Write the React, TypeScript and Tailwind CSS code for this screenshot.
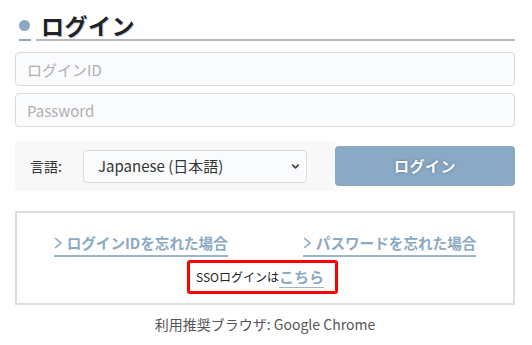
import { ChevronDown } from "lucide-react";

const links = [
  { id: 1, label: "ログインIDを忘れた場合" },
  { id: 2, label: "パスワードを忘れた場合" },
];

const App = () => {
  return (
    <div className="w-[532px] min-h-[345px] bg-white pl-[15px] pr-[17px] pt-[11px] font-['Noto_Sans_CJK_JP','Noto_Sans',sans-serif] text-[#222]">
      {/* title */}
      <div className="flex items-end">
        <div className="ml-[4px] w-[12px] border-b-2 border-[#8aa9c4] h-[30px] flex items-center">
          <span className="block w-[11px] h-[11px] rounded-full bg-[#8aa9c4]" />
        </div>
        <div className="ml-[5px] flex-1 border-b-2 border-[#b8b8b8] pl-[5px]">
          <h1 className="text-[23px] leading-[28px] font-bold tracking-[0.5px] [text-shadow:1px_1px_1px_rgba(60,120,180,0.3)]">
            ログイン
          </h1>
        </div>
      </div>

      {/* inputs */}
      <div className="mt-[11px] flex flex-col gap-[7px]">
        <input
          placeholder="ログインID"
          className="h-[34px] w-full rounded-[4px] border border-[#dcdcdc] bg-[#fafbfd] px-[11px] text-[15px] placeholder:text-[#b0b0b0] outline-none"
        />
        <input
          placeholder="Password"
          type="password"
          className="h-[34px] w-full rounded-[4px] border border-[#dcdcdc] bg-[#fafbfd] px-[11px] text-[15px] placeholder:text-[#b0b0b0] outline-none"
        />
      </div>

      {/* language + button */}
      <div className="mt-[14px] flex items-center">
        <div className="flex h-[50px] w-[320px] items-center bg-[#f8f8f8] pl-[15px]">
          <span className="w-[53px] text-[14px] text-[#333]">言語:</span>
          <div className="relative w-[224px]">
            <select className="h-[33px] w-full appearance-none rounded-[4px] border border-[#dcdcdc] bg-[#fafbfd] pl-[14px] text-[15px] text-[#333] outline-none">
              <option>Japanese (日本語)</option>
            </select>
            <ChevronDown
              size={11}
              strokeWidth={3.5}
              className="pointer-events-none absolute right-[6px] top-[11px] text-[#444]"
            />
          </div>
        </div>
        <button className="h-[40px] flex-1 rounded-[4px] bg-[#8aa9c4] text-[15px] font-bold tracking-[0.5px] text-white [text-shadow:0_0_3px_rgba(40,70,110,0.55)]">
          ログイン
        </button>
      </div>

      {/* help box */}
      <div className="mt-[20px] flex flex-col items-center border-2 border-[#dddddd] pt-[19px] pb-[9px]">
        <div className="flex gap-[75px]">
          {links.map((link) => (
            <a
              key={link.id}
              href="#"
              className="flex items-center border-b-2 border-[#9db5cb] pb-[2px] text-[14.6px] leading-[21px] font-bold text-[#8aa9c4]"
            >
              <svg width="8" height="12" viewBox="0 0 8 12" className="mr-[5px] mt-[1px]">
                <polyline points="1,1 7,6 1,11" fill="none" stroke="#8aa9c4" strokeWidth="1.6" />
              </svg>
              {link.label}
            </a>
          ))}
        </div>
        <div className="mt-[3px] mr-[6px] flex h-[34px] w-[151px] items-center justify-center rounded-[3px] border-[3px] border-[#ff0000] pr-[4px]">
          <span className="text-[12px] text-[#222]">SSOログインは</span>
          <a
            href="#"
            className="border-b-[1.5px] border-[#9db5cb] text-[15px] leading-[20px] font-bold text-[#8aa9c4]"
          >
            こちら
          </a>
        </div>
      </div>

      <p className="mt-[9px] text-center text-[14px] text-[#555]">
        利用推奨ブラウザ: Google Chrome
      </p>
    </div>
  );
};

export default App;
